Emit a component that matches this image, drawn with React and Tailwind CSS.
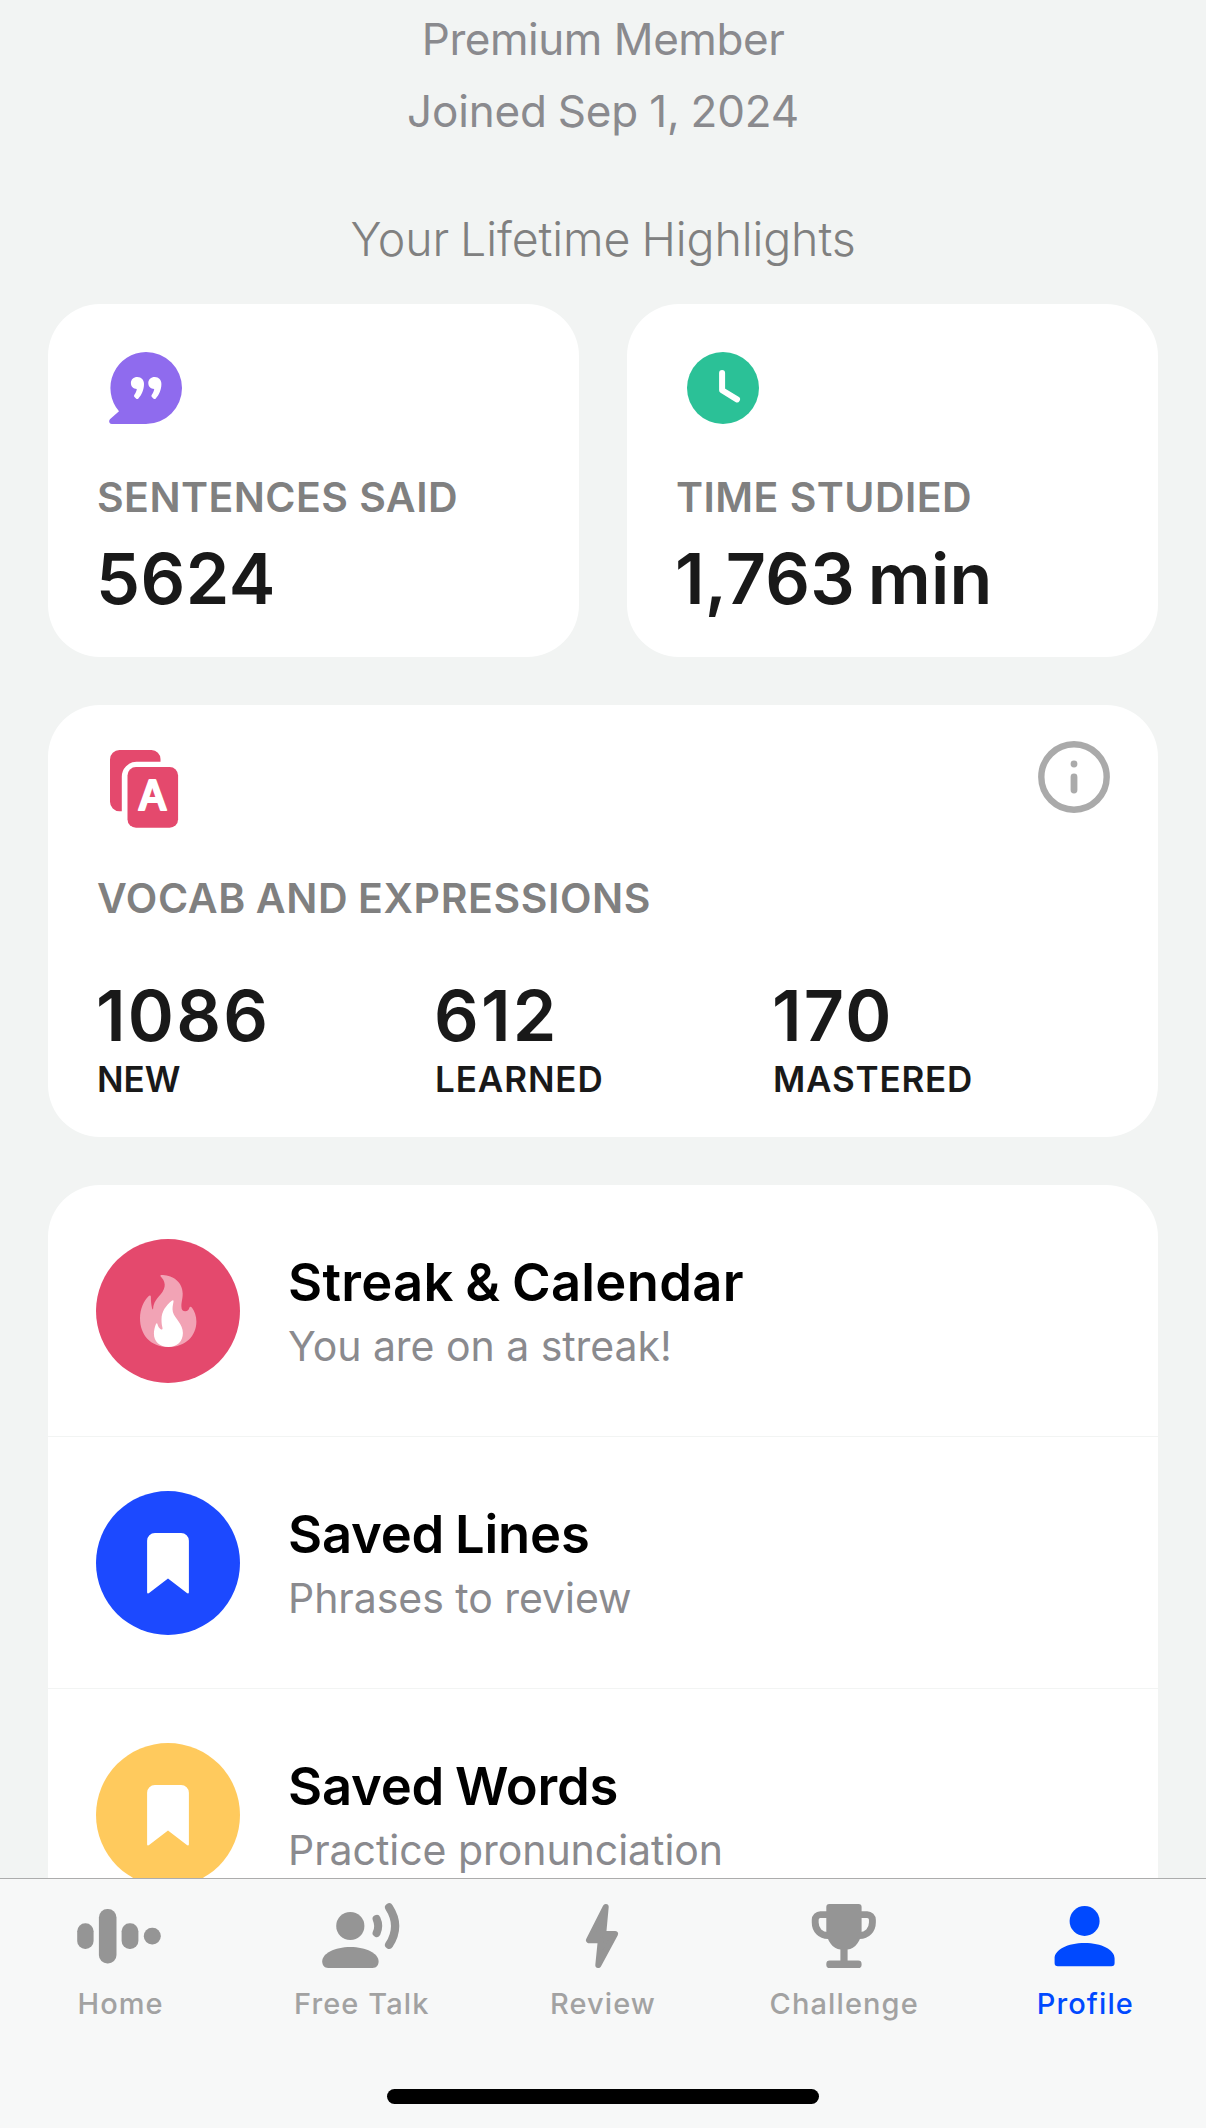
function BubbleIcon() {
  const quote =
    "M41.4 25c4 0 6.6 3 6.6 7 0 6-2.6 11.200-5.600 14.400q-1.200 1.200-2.400.100l-1.500-1.400q-1.100-1.100-.100-2.400c1.200-1.500 2.200-3.500 2.400-5.600-3.500-.2-5.900-2.500-5.900-6C34.900 27.500 37.500 25 41.400 25z";
  return (
    <svg width="96" height="72" viewBox="0 0 96 72">
      <path
        d="M50 0a36 36 0 0 1 0 72H15.800c-2.800 0-3.400-3.200-1.600-4.900L23 59.300A36 36 0 0 1 50 0z"
        fill="#8f6bee"
      />
      <path d={quote} fill="#fff" />
      <path d={quote} fill="#fff" transform="translate(17.4 0)" />
    </svg>
  );
}

function ClockIcon() {
  return (
    <svg width="96" height="72" viewBox="0 0 96 72">
      <circle cx="48" cy="36" r="36" fill="#2bc197" />
      <path
        d="M47.100 21V38.300L62 47.400"
        fill="none"
        stroke="#fff"
        strokeWidth="6"
        strokeLinecap="round"
        strokeLinejoin="round"
      />
    </svg>
  );
}

function CardsIcon() {
  return (
    <svg width="96" height="84" viewBox="0 0 96 84" fill="#e4496d">
      <path d="M23.500 3H55.500a9 9 0 0 1 9 9v2.700H40.500a15 15 0 0 0-14.700 15V64.200H23.500a9.500 9.500 0 0 1-9.500-9.500V12.500A9.500 9.500 0 0 1 23.500 3z" />
      <rect x="31.500" y="20" width="50.600" height="60.800" rx="8.500" />
      <text
        x="56.600"
        y="63"
        textAnchor="middle"
        className="font-[Inter] text-[41px] font-medium"
        fill="#fff"
        stroke="#fff"
        strokeWidth="2.200"
        strokeLinejoin="round"
      >
        A
      </text>
    </svg>
  );
}

function InfoIcon() {
  return (
    <svg width="72" height="72" viewBox="0 0 72 72">
      <circle cx="36" cy="36" r="32.700" fill="none" stroke="#aaa" strokeWidth="6.400" />
      <circle cx="36" cy="23" r="3.400" fill="#aaa" />
      <rect x="32.600" y="32.600" width="6.800" height="19.800" rx="3.400" fill="#aaa" />
    </svg>
  );
}

function FlameIcon() {
  return (
    <svg width="144" height="144" viewBox="0 0 144 144">
      <path
        d="M64.500 37.300C64 36.300 65 36 67 36.100C77 36.500 86.700 43.500 86.700 54.500C86.700 60 85.400 62.500 85.400 67.500C85.400 70.800 87 72.300 89.200 72.300C91.700 72.300 92.800 70.900 93.300 69C93.700 67.500 95 67.500 96 68.800C98.500 72 100.400 77 100.400 82.500C100.400 97 89.500 108 72.500 108C54 108 44 95.500 44 79.300C44 70.500 47.500 62 52.500 57.200C53.800 56 54.900 56.500 54.900 58C54.800 61.500 55.300 65.500 56 69C56.500 71 57.100 70.700 57.200 69C57.600 63.500 61 59.500 64.500 55.500C67.500 52 68.900 48.500 68.700 45.500C68.500 42 66.500 39.500 64.500 37.300Z"
        fill="#f2a3b5"
      />
      <path
        d="M75.800 61.800C77 60.800 77.700 61.300 77.500 62.800C76.900 66 76 69.500 76.900 73C78.700 79.500 86.900 84.500 86.900 94C86.900 102.500 81 108 72.500 108C63.500 108 57.900 102.500 57.900 94.500C57.900 91 58.900 87.500 60 85C60.600 84 61.300 84.200 61.500 85.200C62 87.500 63.200 89.200 64.700 90.200C66 91 66.700 90.300 66.500 89C65.900 86.500 65.500 84 65.500 80.500C65.500 72.500 70 66.500 75.800 61.800Z"
        fill="#fff"
      />
    </svg>
  );
}

function BookmarkIcon() {
  return (
    <svg width="144" height="144" viewBox="0 0 144 144">
      <path
        d="M58.900 42H85.100a7.800 7.800 0 0 1 7.800 7.800V101c0 1.500-1 1.900-2 1L72 87.500L53.100 102c-1 .9-2 .5-2-1V49.800A7.800 7.800 0 0 1 58.900 42z"
        fill="#fff"
      />
    </svg>
  );
}

function HomeIcon() {
  return (
    <svg width="96" height="72" viewBox="0 0 96 72" fill="currentColor">
      <rect x="4.200" y="23.300" width="16.400" height="25.600" rx="8" />
      <rect x="25.900" y="8.900" width="17.600" height="54.500" rx="8.500" />
      <rect x="48.600" y="23.300" width="16.800" height="25.600" rx="8" />
      <rect x="70.800" y="27.800" width="17" height="16.600" rx="8.200" />
    </svg>
  );
}

function TalkIcon() {
  return (
    <svg width="96" height="72" viewBox="0 0 96 72" fill="currentColor">
      <circle cx="36.300" cy="26" r="14.100" />
      <path d="M36.400 47c15.800 0 28.200 6.500 28.200 14.500 0 3.600-2.200 6.500-6 6.500H14.200c-3.800 0-6-2.900-6-6.500C8.200 53.500 20.600 47 36.400 47z" />
      <g fill="none" stroke="currentColor" strokeLinecap="round">
        <path d="M62.600 19Q65.800 26 62.600 33" strokeWidth="8" />
        <path d="M75.100 7.400Q87.200 26 75.100 44.800" strokeWidth="8.200" />
      </g>
    </svg>
  );
}

function BoltIcon() {
  return (
    <svg width="96" height="72" viewBox="0 0 96 72">
      <path
        d="M50.700 7L34 40.200H45.800L43.300 65L60 34H48.200z"
        fill="currentColor"
        stroke="currentColor"
        strokeWidth="6"
        strokeLinejoin="round"
      />
    </svg>
  );
}

function TrophyIcon() {
  return (
    <svg width="96" height="72" viewBox="0 0 96 72" fill="currentColor">
      <path d="M33.300 4H62.600a3 3 0 0 1 3 3V31C65.600 40 59 49.300 51.600 49.600V60.600H62.200a3.400 3.400 0 0 1 3.400 3.400V64.700a3.400 3.400 0 0 1-3.400 3.400H33.700a3.400 3.400 0 0 1-3.400-3.400V64a3.400 3.400 0 0 1 3.400-3.400H44.400V49.600C37 49.300 30.300 40 30.300 31V7A3 3 0 0 1 33.300 4z" />
      <path
        d="M31 14.600H24.400a5.200 5.200 0 0 0-5.200 5.200V22.500C19.200 30 24.500 35.500 32 35.500M65 14.600H71.200a5.200 5.200 0 0 1 5.200 5.200V22.500C76.400 30 71 35.500 63.600 35.500"
        fill="none"
        stroke="currentColor"
        strokeWidth="6.900"
      />
    </svg>
  );
}

function ProfileIcon() {
  return (
    <svg width="96" height="72" viewBox="0 0 96 72" fill="currentColor">
      <circle cx="47.600" cy="21" r="15" />
      <path d="M47.600 43c17 0 30 6.800 30 15.500V63a3.200 3.200 0 0 1-3.200 3.200H20.800A3.200 3.200 0 0 1 17.600 63V58.500C17.600 49.800 30.600 43 47.600 43z" />
    </svg>
  );
}

const vocab = [
  { value: "1086", label: "NEW", tracking: "tracking-normal" },
  { value: "612", label: "LEARNED", tracking: "tracking-[0.9px]" },
  { value: "170", label: "MASTERED", tracking: "tracking-[0.8px]" },
];

const rows = [
  { title: "Streak & Calendar", sub: "You are on a streak!", color: "bg-[#e4496d]", tracking: "tracking-[0.3px]", Icon: FlameIcon },
  { title: "Saved Lines", sub: "Phrases to review", color: "bg-[#1c49ff]", tracking: "tracking-[-0.2px]", Icon: BookmarkIcon },
  { title: "Saved Words", sub: "Practice pronunciation", color: "bg-[#ffca5d]", tracking: "tracking-[-0.2px]", Icon: BookmarkIcon },
];

const tabs = [
  { label: "Home", Icon: HomeIcon },
  { label: "Free Talk", Icon: TalkIcon },
  { label: "Review", Icon: BoltIcon },
  { label: "Challenge", Icon: TrophyIcon },
  { label: "Profile", Icon: ProfileIcon, active: true },
];

function StatCard({ icon, label, value, tracking }) {
  return (
    <div className="h-[353px] rounded-[52px] bg-white px-12 pt-12">
      {icon}
      <p className="mt-12 ml-px text-[41px] leading-[50px] font-[560] tracking-[0.45px] text-[#808080]">{label}</p>
      <p className={`mt-[15px] text-[70px] leading-[84px] font-semibold text-[#191919] ${tracking}`}>{value}</p>
    </div>
  );
}

export default function App() {
  return (
    <div className="flex h-[2128px] w-[1206px] flex-col overflow-hidden bg-[#f2f4f3] font-[Inter,sans-serif]">
      <main className="h-[1878px] shrink-0 overflow-hidden px-12 pt-[3px]">
        <div className="text-center text-[44px] leading-[72px] text-[#8a8a8e]">
          <p className="tracking-[-0.45px]">Premium Member</p>
          <p className="tracking-[-0.2px] [word-spacing:-1px]">Joined Sep 1, 2024</p>
        </div>
        <h2 className="mt-[59px] text-center text-[46.5px] leading-[66px] font-[330] tracking-[-0.1px] text-[#808080] [word-spacing:-2px]">
          Your Lifetime Highlights
        </h2>

        <section className="mt-8 grid grid-cols-2 gap-12">
          <StatCard icon={<BubbleIcon />} label="SENTENCES SAID" value="5624" tracking="tracking-[0.5px]" />
          <StatCard
            icon={<ClockIcon />}
            label="TIME STUDIED"
            value="1,763 min"
            tracking="tracking-[0.2px] [word-spacing:-5px]"
          />
        </section>

        <section className="mt-12 h-[432px] rounded-[52px] bg-white px-12 pt-9">
          <div className="flex h-[90px] items-start justify-between">
            <div className="pt-1.5">
              <CardsIcon />
            </div>
            <InfoIcon />
          </div>
          <p className="mt-[42px] ml-px text-[41px] leading-[50px] font-[560] tracking-[0.6px] text-[#808080] [word-spacing:-1px]">
            VOCAB AND EXPRESSIONS
          </p>
          <div className="mt-[51px] grid grid-cols-3 text-[#191919]">
            {vocab.map(({ value, label, tracking }) => (
              <div key={label}>
                <p className="text-[70px] leading-[84px] font-semibold tracking-[2.2px]">{value}</p>
                <p className={`ml-px text-[35px] leading-[42px] font-[560] ${tracking}`}>{label}</p>
              </div>
            ))}
          </div>
        </section>

        <section className="mt-12 rounded-t-[52px] bg-white">
          {rows.map(({ title, sub, color, tracking, Icon }) => (
            <div key={title} className="flex gap-12 border-b border-[#f2f4f3] pt-[54px] pb-[53px] pl-12">
              <div className={`size-36 shrink-0 overflow-hidden rounded-full ${color}`}>
                <Icon />
              </div>
              <div className="pt-[11px]">
                <p className={`text-[52.5px] leading-[64px] font-semibold text-black [word-spacing:-2px] ${tracking}`}>
                  {title}
                </p>
                <p className="mt-[7px] text-[41px] leading-[50px] tracking-[-0.04px] text-[#8a8a8e]">{sub}</p>
              </div>
            </div>
          ))}
        </section>
      </main>

      <nav className="flex h-[250px] shrink-0 flex-col items-center border-t border-[#acacac] bg-[#f7f8f8]">
        <div className="grid w-full grid-cols-5 pt-[21px]">
          {tabs.map(({ label, Icon, active }) => (
            <div
              key={label}
              className={`flex flex-col items-center ${active ? "text-[#0049ff]" : "text-[#959595]"}`}
            >
              <Icon />
              <span
                className={`mt-3.5 text-[29px] leading-9 font-medium tracking-[1.1px] ${active ? "" : "text-[#a2a2a2]"}`}
              >
                {label}
              </span>
            </div>
          ))}
        </div>
        <div className="mt-[67px] h-[15px] w-[432px] rounded-full bg-black" />
      </nav>
    </div>
  );
}
